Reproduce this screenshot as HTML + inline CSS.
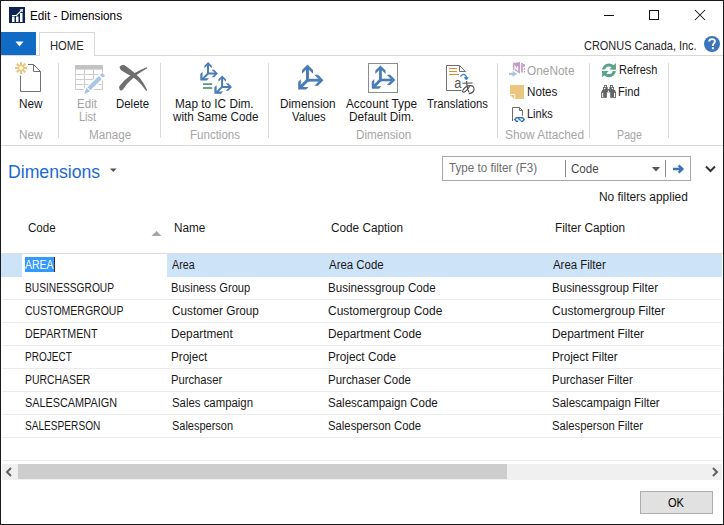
<!DOCTYPE html>
<html><head><meta charset="utf-8"><style>
html,body{margin:0;padding:0;background:#fff;width:724px;height:525px;overflow:hidden}
#win{position:absolute;left:0;top:0;width:724px;height:525px;background:#fff;overflow:hidden;font-family:"Liberation Sans",sans-serif}
.t{position:absolute;white-space:nowrap;line-height:20px;transform-origin:0 0}
.b{position:absolute}
svg{position:absolute;overflow:visible}

</style></head><body>
<div id="win">
<!-- window border -->
<div class="b" style="left:0;top:0;width:724px;height:1px;background:#1a1a1a"></div>
<div class="b" style="left:0;top:524px;width:724px;height:1px;background:#1a1a1a"></div>
<div class="b" style="left:0;top:0;width:1px;height:525px;background:#1a1a1a"></div>
<div class="b" style="left:723px;top:0;width:1px;height:525px;background:#1a1a1a"></div>
<!-- app logo -->
<svg style="left:9px;top:7px" width="16" height="16" viewBox="0 0 16 16">
<rect width="16" height="16" fill="#0b2454"/>
<rect x="3" y="9.5" width="2.5" height="5.5" fill="#fff"/>
<rect x="7" y="9.5" width="2.5" height="5.5" fill="#fff"/>
<rect x="11" y="6" width="2.5" height="9" fill="#fff"/>
<path d="M3 8.5 H7.5 L12.5 3.5" stroke="#fff" stroke-width="1.2" fill="none"/>
<path d="M10.5 2.5 L14 2 L13.5 5.5 Z" fill="#fff"/>
</svg>
<!-- title controls -->
<div class="b" style="left:604px;top:15px;width:10px;height:1px;background:#111"></div>
<div class="b" style="left:649px;top:10px;width:8px;height:8px;border:1px solid #111"></div>
<svg style="left:695px;top:10px" width="10" height="10" viewBox="0 0 10 10"><path d="M0 0L10 10M10 0L0 10" stroke="#111" stroke-width="1.05"/></svg>
<!-- menu button -->
<div class="b" style="left:1px;top:32px;width:35px;height:23px;background:#0f6bc3"></div>
<svg style="left:15px;top:41px" width="9" height="6" viewBox="0 0 9 6"><path d="M0.5 0.5 H8.5 L4.5 5.5 Z" fill="#fff"/></svg>
<!-- tab -->
<div class="b" style="left:1px;top:55px;width:38px;height:1px;background:#d9d9d9"></div>
<div class="b" style="left:39px;top:32px;width:54px;height:23px;border:1px solid #d9d9d9;border-bottom:none;background:#fff"></div>
<div class="b" style="left:95px;top:55px;width:628px;height:1px;background:#d9d9d9"></div>
<!-- help -->
<svg style="left:703px;top:35px" width="18" height="18" viewBox="0 0 18 18">
<circle cx="9" cy="9" r="8" fill="#3a74bb"/>
<path d="M6.2 6.6 C6.2 4.9 7.4 4.1 9 4.1 C10.7 4.1 11.9 5 11.9 6.5 C11.9 8.3 9.9 8.5 9.9 10.2 V10.9" stroke="#fff" stroke-width="1.9" fill="none"/>
<rect x="8.9" y="12.2" width="2" height="2" fill="#fff"/>
</svg>
<!-- ribbon separators -->
<div class="b" style="left:58px;top:63px;width:1px;height:75px;background:#dadada"></div>
<div class="b" style="left:160px;top:63px;width:1px;height:75px;background:#dadada"></div>
<div class="b" style="left:268px;top:63px;width:1px;height:75px;background:#dadada"></div>
<div class="b" style="left:497px;top:63px;width:1px;height:75px;background:#dadada"></div>
<div class="b" style="left:589px;top:63px;width:1px;height:75px;background:#dadada"></div>
<div class="b" style="left:668px;top:63px;width:1px;height:75px;background:#dadada"></div>
<div class="b" style="left:1px;top:145px;width:722px;height:1px;background:#d9d9d9"></div>
<!-- filter box -->
<div class="b" style="left:442px;top:156px;width:247px;height:23px;border:1px solid #a9a9a9"></div>
<div class="b" style="left:565px;top:160px;width:1px;height:17px;background:#8c8c8c"></div>
<div class="b" style="left:665px;top:160px;width:1px;height:17px;background:#8c8c8c"></div>
<svg style="left:652px;top:167px" width="8" height="5" viewBox="0 0 8 5"><path d="M0 0H8L4 4.6Z" fill="#555"/></svg>
<svg style="left:672px;top:164px" width="13" height="10" viewBox="0 0 13 10"><path d="M1 5H10M6.6 1.3L10.4 5L6.6 8.7" stroke="#3a72b8" stroke-width="2.4" fill="none"/></svg>
<svg style="left:705px;top:165px" width="11" height="8" viewBox="0 0 11 8"><path d="M1 1.5L5.5 6L10 1.5" stroke="#333" stroke-width="2" fill="none"/></svg>
<svg style="left:110px;top:168px" width="7" height="5" viewBox="0 0 7 5"><path d="M0 0.5H6.5L3.25 4Z" fill="#555"/></svg>
<!-- table -->
<svg style="left:151px;top:230px" width="11" height="7" viewBox="0 0 11 7"><path d="M0.5 6H10.5L5.5 1Z" fill="#a5a5a5"/></svg>
<div class="b" style="left:1px;top:253px;width:722px;height:1px;background:#dcdcdc"></div>
<div class="b" style="left:1px;top:254px;width:721px;height:23px;background:#cde3f7"></div>
<div class="b" style="left:22px;top:254px;width:145px;height:23px;background:#fff"></div>
<div class="b" style="left:25px;top:257px;width:29px;height:15px;background:#3399ff"></div>
<div class="b" style="left:54px;top:257px;width:1px;height:15px;background:#3b2a1e"></div>
<div class="b" style="left:2px;top:299px;width:720px;height:1px;background:#ebebeb"></div>
<div class="b" style="left:2px;top:322px;width:720px;height:1px;background:#ebebeb"></div>
<div class="b" style="left:2px;top:345px;width:720px;height:1px;background:#ebebeb"></div>
<div class="b" style="left:2px;top:368px;width:720px;height:1px;background:#ebebeb"></div>
<div class="b" style="left:2px;top:391px;width:720px;height:1px;background:#ebebeb"></div>
<div class="b" style="left:2px;top:414px;width:720px;height:1px;background:#ebebeb"></div>
<div class="b" style="left:2px;top:437px;width:720px;height:1px;background:#ebebeb"></div>
<div class="b" style="left:2px;top:460px;width:720px;height:1px;background:#ebebeb"></div>
<!-- scrollbar -->
<div class="b" style="left:2px;top:464px;width:720px;height:16px;background:#f0f0f0"></div>
<div class="b" style="left:18px;top:464px;width:489px;height:15px;background:#cdcdcd"></div>
<svg style="left:5px;top:467px" width="8" height="10" viewBox="0 0 8 10"><path d="M6 1L2 5L6 9" stroke="#606060" stroke-width="2" fill="none"/></svg>
<svg style="left:711px;top:467px" width="8" height="10" viewBox="0 0 8 10"><path d="M2 1L6 5L2 9" stroke="#606060" stroke-width="2" fill="none"/></svg>
<!-- OK button -->
<div class="b" style="left:640px;top:491px;width:71px;height:21px;background:#e1e1e1;border:1px solid #adadad"></div>
<svg style="left:0;top:0" width="724" height="525" viewBox="0 0 724 525">
<path d="M28 64.5H33.5L40.5 71.5V91.5H20.5V75.5" fill="none" stroke="#717171" stroke-width="1"/>
<path d="M33.5 64.5V71.5H40.5" fill="none" stroke="#717171" stroke-width="1"/>
<path d="M22.70 68.00L27.00 68.00M22.20 69.20L25.24 72.24M21.00 69.70L21.00 74.00M19.80 69.20L16.76 72.24M19.30 68.00L15.00 68.00M19.80 66.80L16.76 63.76M21.00 66.30L21.00 62.00M22.20 66.80L25.24 63.76" stroke="#ecc57c" stroke-width="2.1" fill="none"/>
<rect x="75" y="65" width="28" height="4.6" fill="#c3c3c3"/>
<path d="M75.5 69V89.5H102.5V69M84.5 69.5V89.5M93.5 69.5V89.5M75.5 74.5H102.5M75.5 79.5H102.5M75.5 84.5H102.5" fill="none" stroke="#cdcdcd" stroke-width="1"/>
<path d="M84.5 93.5L104 74" stroke="#fff" stroke-width="7"/>
<path d="M89 88.8L100.3 77.5" stroke="#a9c5e7" stroke-width="4.1"/>
<path d="M101.4 76.4L103.6 74.2" stroke="#a9c5e7" stroke-width="4.1"/>
<polygon points="84,94 86.5,87.8 90.2,91.5" fill="#a9c5e7"/>
<path d="M119.6 66.8 Q121 64.6 124.3 65.1 L129.8 68.9 L134.6 73 L140.1 78.2 L143.5 83.3 L147.3 90.2 L146.2 90.9 L142.1 85.4 L137.3 80.6 L132.5 76.8 L127.7 74.2 L122.2 71 Q119.2 69.2 119.6 66.8Z" fill="#6f6f6f"/>
<path d="M119.3 86.2 L124.3 80.6 L129.1 76.5 L134.6 73 L141.4 69.6 L146.9 67.2 L147.3 68.2 L141.4 71.7 L136.6 75.1 L131.8 79.2 L127 84 L123.2 89.2 Q121.5 91 120 90.2 Q118.6 88.5 119.3 86.2Z" fill="#6f6f6f"/>
<g transform="translate(294 60) scale(1 1)" fill="#4a7cb7" stroke="#4a7cb7" stroke-width="0"><polygon points="13.50,4.50 19.00,10.00 19.00,13.70 13.50,8.20 8.00,13.70 8.00,10.00"/><rect x="12" y="7.6" width="3" height="14"/><polygon points="29.50,20.20 24.00,25.70 20.30,25.70 25.80,20.20 20.30,14.70 24.00,14.70"/><rect x="12" y="18.8" width="14" height="2.8"/><polygon points="4.20,29.60 4.20,21.82 6.82,19.21 6.82,26.98 14.59,26.98 11.98,29.60"/><path d="M14.2 19.5 L6.6 27.1" stroke-width="3.1" stroke="#4a7cb7"/></g>
<g fill="#4a7cb7"><polygon points="208.10,62.10 211.84,65.84 211.84,68.36 208.10,64.62 204.36,68.36 204.36,65.84"/><polygon points="217.90,73.60 214.16,77.34 211.64,77.34 215.38,73.60 211.64,69.86 214.16,69.86"/><polygon points="200.30,80.50 200.30,73.89 202.52,71.66 202.52,78.28 209.14,78.28 206.91,80.50"/><path d="M208 64V74.6M207 73.6H216M208.6 73L202 79.6" stroke="#4a7cb7" stroke-width="2" fill="none"/></g>
<g fill="#4a7cb7"><polygon points="222.20,75.40 225.94,79.14 225.94,81.66 222.20,77.92 218.46,81.66 218.46,79.14"/><polygon points="232.00,86.90 228.26,90.64 225.74,90.64 229.48,86.90 225.74,83.16 228.26,83.16"/><polygon points="214.40,93.80 214.40,87.19 216.62,84.96 216.62,91.58 223.24,91.58 221.01,93.80"/><path d="M222.1 77.3V87.89999999999999M221.1 86.89999999999999H230.1M222.7 86.3L216.1 92.89999999999999" stroke="#4a7cb7" stroke-width="2" fill="none"/></g>
<rect x="203" y="83.2" width="9.2" height="1.8" fill="#5c9a7c"/><rect x="203" y="87.1" width="9.2" height="1.8" fill="#5c9a7c"/>
<rect x="368.5" y="63.5" width="29" height="29" fill="none" stroke="#8c8c8c" stroke-width="1"/>
<g transform="translate(367.9 61.2) scale(0.93 0.93)" fill="#4a7cb7" stroke="#4a7cb7" stroke-width="0"><polygon points="13.50,4.50 19.00,10.00 19.00,13.70 13.50,8.20 8.00,13.70 8.00,10.00"/><rect x="12" y="7.6" width="3" height="14"/><polygon points="29.50,20.20 24.00,25.70 20.30,25.70 25.80,20.20 20.30,14.70 24.00,14.70"/><rect x="12" y="18.8" width="14" height="2.8"/><polygon points="4.20,29.60 4.20,21.82 6.82,19.21 6.82,26.98 14.59,26.98 11.98,29.60"/><path d="M14.2 19.5 L6.6 27.1" stroke-width="3.1" stroke="#4a7cb7"/></g>
<path d="M459.5 65.5H446.5V90.5H461.5M459.5 65.5L465.5 71.5M459.5 65.5V71.5H465.5" fill="none" stroke="#6f6f6f" stroke-width="1"/>
<path d="M449 68.5H457M449 71.5H457M449 74.5H459" stroke="#e38a2c" stroke-width="1"/>
<path d="M460.4 76.6Q463.4 72.4 466.3 76.3V79.2M464.4 77.3L466.3 79.3L468.3 77.3" fill="none" stroke="#3b7bc4" stroke-width="1.3"/>
<text x="454.2" y="87.8" font-family="Liberation Sans" font-size="14" fill="#555" transform="translate(454.2 0) scale(0.92 1) translate(-454.2 0)">a</text>
<path d="M462.5 83.3L472.6 83M466.6 81C466.8 85 467.3 89 469 92.3M470.3 85.3C468.5 88.5 466 91.5 464 92.2C462.6 92.6 462.2 91.4 462.9 90.2C464.3 87.6 467.6 85.6 470.6 85.6C473 85.6 474.2 87.3 474 89.6C473.8 91.9 471.6 93.2 468.8 93.6" fill="none" stroke="#4e4e4e" stroke-width="1.1"/>
<polygon points="513,63 520,62 520,73.7 514.6,70.2 513,70" fill="#c69dca"/>
<path d="M514.9 70.2V66.3L517.7 70V66.2" fill="none" stroke="#fff" stroke-width="1.1"/>
<g fill="#c8a2cc"><rect x="521.1" y="63" width="1.8" height="9.5"/><rect x="522.9" y="64" width="2.1" height="2.8"/><rect x="524" y="68" width="1" height="1.8"/><rect x="524" y="71" width="1" height="1.5"/></g>
<path d="M509 73.9H513.8" stroke="#a9c4e2" stroke-width="2.2"/><polygon points="512.6,70.8 517.2,73.9 512.6,77" fill="#a9c4e2"/>
<polygon points="510,85 524,85 524,99 515.2,99 515.2,94.2 510,94.2" fill="#eac67f"/>
<polygon points="510,94.9 514.4,94.9 514.4,99.2" fill="#eac67f"/>
<path d="M512.5 121V107.5H519.5L522.5 110.5V115.8" fill="none" stroke="#6c6c6c" stroke-width="1"/><path d="M519.5 107.5V110.5H522.5" fill="none" stroke="#6c6c6c" stroke-width="1"/>
<path d="M520.8 117.8H516.4L514.9 119.5L516.4 121.2H518.2M518.2 117.8H522.6L524.2 119.5L522.6 121.2H520.8M518.3 118.5L520.7 120.5" fill="none" stroke="#3d76bf" stroke-width="1.5"/>
<clipPath id="rt"><rect x="598" y="58" width="22" height="11.6"/></clipPath><clipPath id="rb"><rect x="598" y="71" width="22" height="10"/></clipPath>
<g fill="#5aa38b"><circle cx="609" cy="70.3" r="5.35" fill="none" stroke="#5aa38b" stroke-width="3.1" clip-path="url(#rt)"/><polygon points="615.9,63.1 615.9,69.6 609.3,69.6"/><circle cx="609" cy="70.3" r="5.35" fill="none" stroke="#5aa38b" stroke-width="3.1" clip-path="url(#rb)"/><polygon points="602.1,71 608.7,71 602.1,77.5"/></g>
<g fill="#646464"><rect x="604.2" y="85" width="2.8" height="3"/><rect x="610" y="85" width="2.9" height="3"/><rect x="603" y="87" width="4.7" height="5"/><rect x="609.4" y="87" width="4.5" height="5"/><rect x="601.1" y="91.5" width="5.8" height="6.3"/><rect x="610.2" y="91.5" width="5.8" height="6.3"/><rect x="606.9" y="89" width="3.3" height="3.4"/><rect x="602" y="90" width="1.6" height="2"/><rect x="613.6" y="90" width="1.6" height="2"/></g>
<g fill="#fff"><circle cx="605.6" cy="86.5" r="0.65"/><circle cx="611.5" cy="86.5" r="0.65"/><circle cx="604.6" cy="88.6" r="0.75"/><circle cx="612.4" cy="88.6" r="0.75"/><circle cx="608.5" cy="91.3" r="0.7"/><rect x="602.2" y="92.8" width="1" height="4.2"/><rect x="614.1" y="92.8" width="1" height="4.2"/></g>
</svg>
<div class="t" style="left:29.64px;top:6px;font-size:12px;color:#000;transform:scaleX(0.9784);">Edit - Dimensions</div><div class="t" style="left:49.98px;top:36px;font-size:12px;color:#262626;transform:scaleX(0.9333);">HOME</div><div class="t" style="left:584.14px;top:36px;font-size:12px;color:#262626;transform:scaleX(0.9128);">CRONUS Canada, Inc.</div><div class="t" style="left:18.84px;top:94px;font-size:12px;color:#181818;transform:scaleX(0.9785);">New</div><div class="t" style="left:76.95px;top:94px;font-size:12px;color:#a3a3a3;transform:scaleX(0.9627);">Edit</div><div class="t" style="left:79.30px;top:107px;font-size:12px;color:#a3a3a3;transform:scaleX(0.9105);">List</div><div class="t" style="left:115.86px;top:94px;font-size:12px;color:#181818;transform:scaleX(0.9514);">Delete</div><div class="t" style="left:174.73px;top:94px;font-size:12px;color:#181818;transform:scaleX(0.9825);">Map to IC Dim.</div><div class="t" style="left:172.62px;top:107px;font-size:12px;color:#181818;transform:scaleX(0.9701);">with Same Code</div><div class="t" style="left:279.73px;top:94px;font-size:12px;color:#181818;transform:scaleX(0.9805);">Dimension</div><div class="t" style="left:292.25px;top:107px;font-size:12px;color:#181818;transform:scaleX(0.9386);">Values</div><div class="t" style="left:346.48px;top:94px;font-size:12px;color:#181818;transform:scaleX(0.9797);">Account Type</div><div class="t" style="left:349.33px;top:107px;font-size:12px;color:#181818;transform:scaleX(0.9846);">Default Dim.</div><div class="t" style="left:427.35px;top:94px;font-size:12px;color:#181818;transform:scaleX(0.9396);">Translations</div><div class="t" style="left:526.94px;top:61px;font-size:12px;color:#a3a3a3;transform:scaleX(0.9893);">OneNote</div><div class="t" style="left:526.95px;top:82px;font-size:12px;color:#181818;transform:scaleX(0.9699);">Notes</div><div class="t" style="left:527.00px;top:104px;font-size:12px;color:#181818;transform:scaleX(0.9173);">Links</div><div class="t" style="left:618.60px;top:60px;font-size:12px;color:#181818;transform:scaleX(0.9139);">Refresh</div><div class="t" style="left:618.38px;top:82px;font-size:12px;color:#181818;transform:scaleX(0.9296);">Find</div><div class="t" style="left:18.84px;top:125px;font-size:12px;color:#a6a6a6;transform:scaleX(0.9785);">New</div><div class="t" style="left:89.04px;top:125px;font-size:12px;color:#a6a6a6;transform:scaleX(0.9733);">Manage</div><div class="t" style="left:190.35px;top:125px;font-size:12px;color:#a6a6a6;transform:scaleX(0.9612);">Functions</div><div class="t" style="left:355.94px;top:125px;font-size:12px;color:#a6a6a6;transform:scaleX(0.9735);">Dimension</div><div class="t" style="left:504.76px;top:125px;font-size:12px;color:#a6a6a6;transform:scaleX(0.9871);">Show Attached</div><div class="t" style="left:617.02px;top:125px;font-size:12px;color:#a6a6a6;transform:scaleX(0.8924);">Page</div><div class="t" style="left:8.45px;top:162px;font-size:18px;color:#1b6acf;transform:scaleX(0.9802);">Dimensions</div><div class="t" style="left:449.34px;top:158px;font-size:12px;color:#6d6d6d;transform:scaleX(0.9705);">Type to filter (F3)</div><div class="t" style="left:571.01px;top:159px;font-size:12px;color:#4a4a4a;transform:scaleX(0.9656);">Code</div><div class="t" style="left:598.92px;top:187px;font-size:12px;color:#181818;transform:scaleX(0.9936);">No filters applied</div><div class="t" style="left:28.01px;top:218px;font-size:12px;color:#181818;transform:scaleX(0.9656);">Code</div><div class="t" style="left:173.94px;top:218px;font-size:12px;color:#181818;transform:scaleX(0.9776);">Name</div><div class="t" style="left:331.10px;top:218px;font-size:12px;color:#181818;transform:scaleX(0.9813);">Code Caption</div><div class="t" style="left:555.13px;top:218px;font-size:12px;color:#181818;transform:scaleX(0.9810);">Filter Caption</div><div class="t" style="left:25.48px;top:255px;font-size:12px;color:#fff;transform:scaleX(0.8754);">AREA</div><div class="t" style="left:172.08px;top:255px;font-size:12px;color:#181818;transform:scaleX(0.8917);">Area</div><div class="t" style="left:328.58px;top:255px;font-size:12px;color:#181818;transform:scaleX(0.9536);">Area Code</div><div class="t" style="left:552.58px;top:255px;font-size:12px;color:#181818;transform:scaleX(0.9522);">Area Filter</div><div class="t" style="left:24.96px;top:278px;font-size:12px;color:#181818;transform:scaleX(0.8503);">BUSINESSGROUP</div><div class="t" style="left:171.19px;top:278px;font-size:12px;color:#181818;transform:scaleX(0.9278);">Business Group</div><div class="t" style="left:327.65px;top:278px;font-size:12px;color:#181818;transform:scaleX(0.9660);">Businessgroup Code</div><div class="t" style="left:551.65px;top:278px;font-size:12px;color:#181818;transform:scaleX(0.9691);">Businessgroup Filter</div><div class="t" style="left:25.27px;top:301px;font-size:12px;color:#181818;transform:scaleX(0.8750);">CUSTOMERGROUP</div><div class="t" style="left:171.50px;top:301px;font-size:12px;color:#181818;transform:scaleX(0.9798);">Customer Group</div><div class="t" style="left:327.99px;top:301px;font-size:12px;color:#181818;transform:scaleX(0.9963);">Customergroup Code</div><div class="t" style="left:551.99px;top:301px;font-size:12px;color:#181818;transform:scaleX(1.0026);">Customergroup Filter</div><div class="t" style="left:24.93px;top:324px;font-size:12px;color:#181818;transform:scaleX(0.8889);">DEPARTMENT</div><div class="t" style="left:171.13px;top:324px;font-size:12px;color:#181818;transform:scaleX(0.9842);">Department</div><div class="t" style="left:327.63px;top:324px;font-size:12px;color:#181818;transform:scaleX(0.9884);">Department Code</div><div class="t" style="left:551.62px;top:324px;font-size:12px;color:#181818;transform:scaleX(0.9926);">Department Filter</div><div class="t" style="left:24.98px;top:347px;font-size:12px;color:#181818;transform:scaleX(0.8357);">PROJECT</div><div class="t" style="left:171.15px;top:347px;font-size:12px;color:#181818;transform:scaleX(0.9694);">Project</div><div class="t" style="left:327.63px;top:347px;font-size:12px;color:#181818;transform:scaleX(0.9804);">Project Code</div><div class="t" style="left:551.64px;top:347px;font-size:12px;color:#181818;transform:scaleX(0.9756);">Project Filter</div><div class="t" style="left:24.95px;top:370px;font-size:12px;color:#181818;transform:scaleX(0.8678);">PURCHASER</div><div class="t" style="left:171.18px;top:370px;font-size:12px;color:#181818;transform:scaleX(0.9362);">Purchaser</div><div class="t" style="left:327.66px;top:370px;font-size:12px;color:#181818;transform:scaleX(0.9573);">Purchaser Code</div><div class="t" style="left:551.66px;top:370px;font-size:12px;color:#181818;transform:scaleX(0.9529);">Purchaser Filter</div><div class="t" style="left:25.31px;top:393px;font-size:12px;color:#181818;transform:scaleX(0.9039);">SALESCAMPAIGN</div><div class="t" style="left:171.58px;top:393px;font-size:12px;color:#181818;transform:scaleX(0.9488);">Sales campaign</div><div class="t" style="left:328.08px;top:393px;font-size:12px;color:#181818;transform:scaleX(0.9618);">Salescampaign Code</div><div class="t" style="left:552.08px;top:393px;font-size:12px;color:#181818;transform:scaleX(0.9612);">Salescampaign Filter</div><div class="t" style="left:25.34px;top:416px;font-size:12px;color:#181818;transform:scaleX(0.8428);">SALESPERSON</div><div class="t" style="left:171.60px;top:416px;font-size:12px;color:#181818;transform:scaleX(0.9145);">Salesperson</div><div class="t" style="left:328.09px;top:416px;font-size:12px;color:#181818;transform:scaleX(0.9421);">Salesperson Code</div><div class="t" style="left:552.09px;top:416px;font-size:12px;color:#181818;transform:scaleX(0.9400);">Salesperson Filter</div><div class="t" style="left:667.88px;top:493px;font-size:12px;color:#000;transform:scaleX(0.9234);">OK</div>
</div>
</body></html>
